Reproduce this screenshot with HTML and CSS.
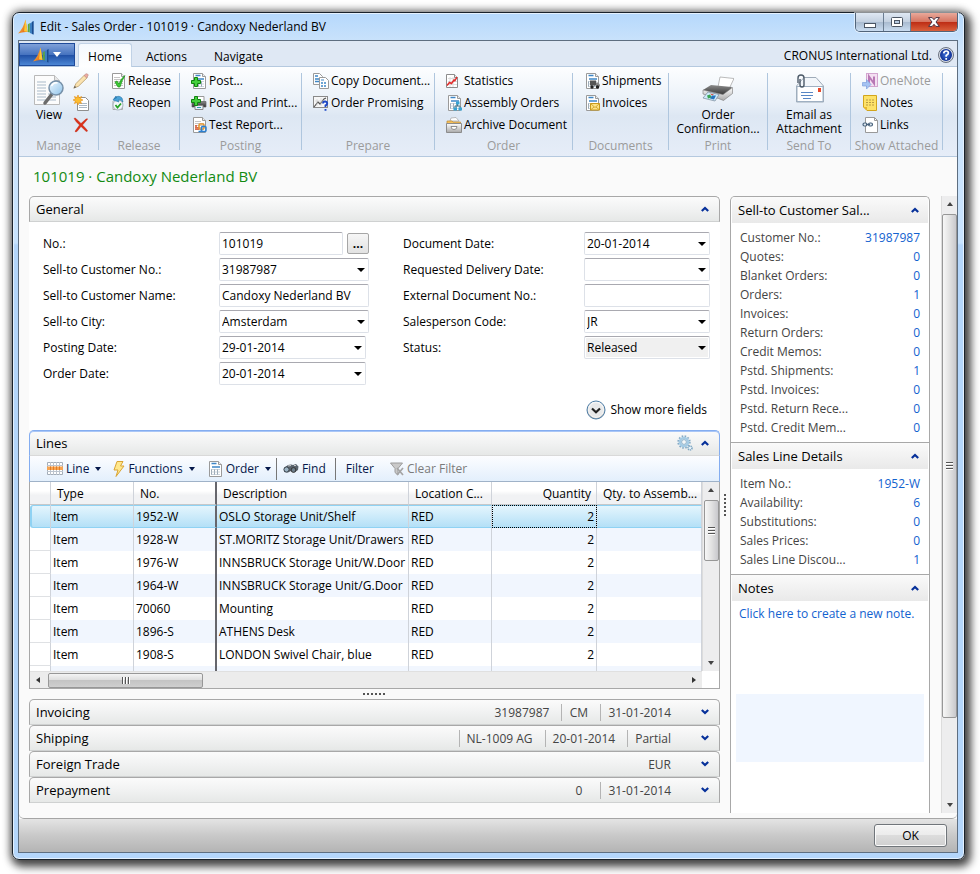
FILE: index.html
```html
<!DOCTYPE html>
<html lang="en">
<head>
<meta charset="utf-8">
<title>Edit - Sales Order - 101019 · Candoxy Nederland BV</title>
<link rel="stylesheet" href="styles.css">
</head>
<body>
<svg class="defs" aria-hidden="true">
  <defs>
    <linearGradient id="g-sail" x1="0" y1="0" x2="1" y2="1"><stop offset="0" stop-color="#ffd34d"/><stop offset="1" stop-color="#e0560f"/></linearGradient>
    <linearGradient id="g-glass" x1="0" y1="0" x2="1" y2="1"><stop offset="0" stop-color="#eef8ff"/><stop offset="1" stop-color="#8fc3ea"/></linearGradient>
    <linearGradient id="g-dark" x1="0" y1="0" x2="0" y2="1"><stop offset="0" stop-color="#8b8b8b"/><stop offset="1" stop-color="#2c2c2c"/></linearGradient>
    <linearGradient id="g-silver" x1="0" y1="0" x2="0" y2="1"><stop offset="0" stop-color="#ffffff"/><stop offset="1" stop-color="#a9a9a9"/></linearGradient>
    <radialGradient id="g-help"><stop offset="0" stop-color="#3f74dc"/><stop offset="1" stop-color="#0f2f94"/></radialGradient>

    <symbol id="logo" viewBox="0 0 16 16">
      <path d="M0 14.500C4 11 6 6 7.500 .5L9.500 13Q5 12.500 0 14.500Z" fill="url(#g-sail)"/>
      <path d="M7.500 .5 6 12.300l3.500.7Z" fill="#fcc934"/>
      <path d="M9.800 13V5.500l2-1.500v9.500Z" fill="#5aa545"/>
      <path d="M12 14V4.500L15.500 2v13.500Z" fill="#3b7fc0"/>
      <path d="M14 3l1.500-1v13.500L14 15Z" fill="#1c4b8f"/>
    </symbol>
    <symbol id="page" viewBox="0 0 16 16">
      <path d="M2.500.5h9l3 3v12h-12Z" fill="#fff" stroke="#9a9a9a"/>
      <path d="M11.500.5v3h3" fill="#eee" stroke="#9a9a9a"/>
      <path d="M4 4.500h6M4 6.500h9M4 8.500h9M4 10.500h9M4 12.500h9" stroke="#c6c6c6"/>
    </symbol>
    <symbol id="bluepage" viewBox="0 0 16 16">
      <path d="M2.500.5h9l3 3v12h-12Z" fill="#fff" stroke="#9a9a9a"/>
      <path d="M11.500.5v3h3" fill="#eee" stroke="#9a9a9a"/>
      <path d="M4.500 2.500h5M5 6h8" stroke="#3e86c6" stroke-width="1.500"/>
      <path d="M4.500 8v6M7.500 8v6M10.500 8v6" stroke="#9aa8b4"/>
      <path d="M4 8.500h9M4 11h9M4 13.500h9" stroke="#b6c3ce" stroke-width=".7"/>
    </symbol>
    <symbol id="view" viewBox="0 0 32 32">
      <path d="M1.500 1.500h20l5 5v24h-25Z" fill="#fcfcfc" stroke="#b9b9b9"/>
      <path d="M21.500 1.500v5h5" fill="#e6e6e6" stroke="#b9b9b9"/>
      <path d="M4 8h9M4 11h9M4 14h9M4 17h9M4 20h9M4 23h9M4 26h9M15 20h8M15 23h8M15 26h8" stroke="#a9bac9"/>
      <path d="M19 20 12 29" stroke="#6b6b6b" stroke-width="3.500" stroke-linecap="round"/>
      <circle cx="23" cy="14" r="7" fill="url(#g-glass)" stroke="#7690a8" stroke-width="1.500"/>
      <path d="M18.500 12q2-4 6-3" fill="none" stroke="#fff" stroke-width="1.500"/>
    </symbol>
    <symbol id="pencil" viewBox="0 0 16 16">
      <path d="M.8 15.200 3 10.500 11.500 2l2.700 2.700L5.500 13.200Z" fill="#fbe3b0" stroke="#b59a6a" stroke-width=".8"/>
      <path d="M11 2.500 13 .8q1.500-.4 2.300 1.200L13.700 5Z" fill="#efaaa2" stroke="#b58a80" stroke-width=".6"/>
      <path d="m.8 15.200 1-2.400 1.400 1.400Z" fill="#555"/>
    </symbol>
    <symbol id="newdoc" viewBox="0 0 16 16">
      <path d="M4.500 2.500h8l3 3v10h-11Z" fill="#fff" stroke="#8f8f8f"/>
      <path d="M6 8.500h8M6 10.500h8M6 12.500h8" stroke="#a9b7c4"/>
      <path d="m5 0 1 2.700L8.600 1.500 7.500 4.100 10 5 7.500 6l1 2.500L6 7.500 5 10 4 7.500 1.400 8.500 2.500 6 0 5l2.500-1L1.400 1.500 4 2.600Z" fill="#fdbd2e" stroke="#e28a12" stroke-width=".6"/>
    </symbol>
    <symbol id="delete" viewBox="0 0 16 16">
      <path d="M1 1.500q1-1 2 0L8 6.500 13 2q2-.8 1.500.3L9.500 8q3 3 5 5.500 0 1.500-1.500.8L8 9.500 4 14.500q-2.200 1-1.800-.5L6.500 8Q2.500 4.500 1 1.500Z" fill="#dc2f17" stroke="#b8240f" stroke-width=".4"/>
    </symbol>
    <symbol id="check" viewBox="0 0 16 16"><path d="m5 9 2-1 2 3q2-6 6-8.500Q12 7 10 14H8Z" fill="#3cc935" stroke="#1c941a" stroke-width=".7"/></symbol>
    <symbol id="reopen" viewBox="0 0 16 16">
      <path d="M3 6v8.500h9.500V6" fill="#f5f5f5" stroke="#aaa"/>
      <circle cx="8" cy="10" r="5" fill="#f4f7f9" stroke="#a8b4be"/>
      <path d="M4 4Q8-1 12 3l1 4q-3-3-5-2l1 2-6-2 3-4 .5 2Z" fill="#4aa3d8" stroke="#2774a8" stroke-width=".6"/>
      <path d="m5.500 10 2 2.500L11 8.500" fill="none" stroke="#27a327" stroke-width="1.800"/>
    </symbol>
    <symbol id="plus" viewBox="0 0 16 16"><path d="M3.500 4.500h3v3h3v3h-3v3h-3v-3h-3v-3h3Z" fill="#45d03d" stroke="#10830e"/></symbol>
    <symbol id="printer16" viewBox="0 0 16 16">
      <path d="M5 1.500h8V7H5Z" fill="#fff" stroke="#999"/>
      <path d="M1 6.500h14V12H1Z" fill="url(#g-dark)" stroke="#666" stroke-width=".7"/>
      <path d="M4 10.500h8v4H4Z" fill="#e9f4fb" stroke="#888"/>
      <path d="M6 12.500h4" stroke="#39a"/>
    </symbol>
    <symbol id="report" viewBox="0 0 16 16">
      <path d="M5 13V8M7 13v-3" stroke="#d9532c" stroke-width="1.500"/>
      <rect x="8" y="7" width="5" height="5" rx="1" fill="none" stroke="#e8952c" stroke-width="1.500"/>
      <rect x="10.500" y="9.500" width="4.500" height="5" rx="1" fill="none" stroke="#2b7fd0" stroke-width="1.500"/>
      <path d="M7.500 14.500h3v-2" fill="none" stroke="#2b7fd0" stroke-width="1.500"/>
    </symbol>
    <symbol id="copy" viewBox="0 0 16 16">
      <path d="M.5.5h6l3 3v8h-9Z" fill="#fff" stroke="#9a9a9a"/><path d="M2 3h3M2 6h5M2 8.500h4" stroke="#3e86c6" stroke-width="1.300"/>
      <path d="M6.500 4.500h6l3 3v8h-9Z" fill="#fff" stroke="#9a9a9a"/><path d="M8 7h3" stroke="#3e86c6"/><path d="M8 10h6M8 13h6" stroke="#3e86c6" stroke-width="1.600" stroke-dasharray="2 1"/>
    </symbol>
    <symbol id="promise" viewBox="0 0 16 16">
      <rect x=".5" y="1.500" width="14" height="11" fill="#f7f7f7" stroke="#8a8a8a"/>
      <path d="m1 12 4-5 2 2 4-5 2-1" fill="none" stroke="#555" stroke-width="1.200"/>
      <path d="M4 4v7M8 3v8M2 6h11" stroke="#ccc" stroke-width=".6"/>
      <path d="M10 8.500q0-2 2-2t2.200 2q0 1.300-1.700 2v1.500M12.500 14v1.800" fill="none" stroke="#1d48c5" stroke-width="1.900"/>
    </symbol>
    <symbol id="stats" viewBox="0 0 16 16">
      <path d="M.5 1.500h8l3 3v10H.5Z" fill="#fff" stroke="#8d8d8d"/>
      <path d="M8.500 1.500v3h3" fill="#eee" stroke="#8d8d8d"/>
      <path d="M2 5.500h9M2 8.500h9M2 11.500h9M4 4v10M7 4v10" stroke="#dedede"/>
      <path d="m1 12.500 2.500-3 2 1 2.500-3.500 1 .5L11 4" fill="none" stroke="#e12b2b" stroke-width="1.500"/>
    </symbol>
    <symbol id="tree" viewBox="0 0 16 16">
      <path d="M11.500 9v2M9 13v-2h5v2" fill="none" stroke="#478"/>
      <path d="M10 6.500h3.500v3H10ZM7.500 12.500H11v3H7.500ZM12.500 12.500H16v3h-3.500Z" fill="#37a3d3"/>
    </symbol>
    <symbol id="archive" viewBox="0 0 16 16">
      <path d="m4 4 1-3 5-.5 3 3.500Z" fill="#fff" stroke="#aaa" stroke-width=".8"/>
      <path d="M1 4h5l1 1h7.500v2H1Z" fill="#f6c15c" stroke="#c08c34" stroke-width=".7"/>
      <path d="M.5 6.500h15v9H.5Z" fill="url(#g-silver)" stroke="#8c8c8c"/>
      <path d="M5 9.500h6q0 3-3 3t-3-3Z" fill="#fff" stroke="#777" stroke-width=".8"/>
    </symbol>
    <symbol id="truck" viewBox="0 0 16 16">
      <path d="M6 7.500h6v5H6Z" fill="#555"/><path d="M12 9.500h2l2 2v2h-4Z" fill="#888"/><circle cx="8" cy="14" r="1.700" fill="#222"/><circle cx="13.500" cy="14" r="1.700" fill="#222"/>
    </symbol>
    <symbol id="mail" viewBox="0 0 16 16"><path d="M6.500 8.500h9v6.500h-9Z" fill="#fde387" stroke="#c99a1c"/><path d="m6.500 8.500 4.500 4 4.500-4M6.500 15l3.500-3M15.500 15 12 12" fill="none" stroke="#c99a1c" stroke-width=".8"/></symbol>
    <symbol id="printer32" viewBox="0 0 32 32">
      <path d="m16 13 2-10 14 1.500-5 10.500Z" fill="#fff" stroke="#aaa" stroke-width=".8"/>
      <path d="M1 16 9 11l21 2-3 5-6 4Z" fill="url(#g-dark)"/>
      <path d="m1 16 20 4.500 9.500-7v6l-9 7-5-2L1 20Z" fill="url(#g-silver)" stroke="#777" stroke-width=".6"/>
      <path d="m6 18 11 2.500-4 6.500-12-3Z" fill="#cfeafa" stroke="#789" stroke-width=".7"/>
      <path d="m5 21.500 3-1 2 3-4 1Z" fill="#38a453"/><path d="m10 21.500 4 0-2 4-4-1Z" fill="#2774bd"/><path d="m8 19.500 4 1-2 1Z" fill="#d34a38"/>
    </symbol>
    <symbol id="envelope" viewBox="0 0 32 32">
      <path d="M3.500 12 11 3.500h12L30.500 12v16h-27Z" fill="#f2f6fa" stroke="#9fabb8"/>
      <path d="M4 12.500h26v15H4Z" fill="#fff" stroke="#9fb0c2"/>
      <path d="M8 18.500h12M8 21.500h12M10 24.500h8" stroke="#5786c4"/>
      <path d="M25 14h3v4h-3Z" fill="#e8472a"/>
      <path d="M5 9V4q0-3 3-3t3 3v7q0 2-2 2t-2-2V5" fill="none" stroke="#4d5a68" stroke-width="1.400"/>
    </symbol>
    <symbol id="onenote" viewBox="0 0 16 16">
      <rect x="4.500" y=".5" width="11" height="13" fill="#f4dff2" stroke="#d3a5d0"/>
      <path d="M7 10.500V3.500l5 7V3.500" fill="none" stroke="#b878b5" stroke-width="2"/>
      <path d="M.5 9.500h4v-3l4.500 5-4.500 4.500v-3h-4Z" fill="#a5c3f2" stroke="#80a2de" stroke-width=".7"/>
    </symbol>
    <symbol id="sticky" viewBox="0 0 16 16">
      <path d="M1.500.5h13v15H5l-3.500-3.500Z" fill="#fde268" stroke="#d2a51d"/><path d="M1.500 12H5v3.500Z" fill="#e8b72b"/>
      <path d="M4 5h8M4 7.500h8M4 10h8" stroke="#b99b45" stroke-dasharray="2 1"/>
    </symbol>
    <symbol id="links" viewBox="0 0 16 16">
      <path d="M3.500.5h9l3 3v12h-12Z" fill="#fff" stroke="#999"/><path d="M12.500.5v3h3" fill="none" stroke="#999"/>
      <rect x="1" y="6" width="4" height="3" rx="1.500" fill="#dfe8f0" stroke="#47617b" stroke-width="1.200"/><rect x="6.500" y="6" width="4" height="3" rx="1.500" fill="#dfe8f0" stroke="#47617b" stroke-width="1.200"/><path d="M4 7.500h4" stroke="#47617b" stroke-width="1.200"/>
    </symbol>
    <symbol id="help" viewBox="0 0 16 16">
      <circle cx="8" cy="8" r="7.500" fill="#d8dde6" stroke="#69717f"/><circle cx="8" cy="8" r="6" fill="url(#g-help)"/>
      <path d="M5.700 6.300Q6 4 8.200 4t2.200 2.100Q10.400 7.500 8.200 8.500v1.200M8.200 11v1.700" fill="none" stroke="#fff" stroke-width="1.700"/>
    </symbol>
    <symbol id="linegrid" viewBox="0 0 16 14">
      <path d="M.5.500h15v12H.5Z" fill="#fff" stroke="#a3adb8"/>
      <path d="M0 3.500h16M0 9.500h16M3.500 0v13M6.500 0v13M9.500 0v13M12.500 0v13" stroke="#bcc4ce"/>
      <path d="M0 4.500h16v3.500H0Z" fill="#f7a552"/><path d="M3.500 4.500v3.500M6.500 4.500v3.500M9.500 4.500v3.500M12.500 4.500v3.500" stroke="#e57c22"/>
    </symbol>
    <symbol id="bolt" viewBox="0 0 12 16"><path d="M4 .5h6L7.500 5H11L3 15.500 5 9H1Z" fill="#ffe88c" stroke="#d9a436"/></symbol>
    <symbol id="binoc" viewBox="0 0 16 12">
      <path d="M1 5 5 2l3-.5 2 .5 3-1 2.500 2.500L15 7l-3 2-3-1.500L8 8 5 9.500 1 9Z" fill="#59636d"/>
      <circle cx="3.500" cy="6.500" r="2.600" fill="#9db4c4" stroke="#3c444c"/><circle cx="10.500" cy="7" r="2.400" fill="#6f808d" stroke="#333"/><path d="m5 3 3-.5M11 2.500l2 0" stroke="#ccc"/>
    </symbol>
    <symbol id="funnel" viewBox="0 0 14 14">
      <path d="M.5 1h12L8 6.500V13l-3-2.500v-4Z" fill="#c9c9c9" stroke="#9c9c9c"/><path d="m7 6 6 7M13 6l-6 7" stroke="#a4a4a4" stroke-width="1.700"/>
    </symbol>
    <symbol id="gears" viewBox="0 0 16 16">
      <circle cx="7" cy="7" r="5.800" fill="none" stroke="#86abc6" stroke-width="1.800" stroke-dasharray="1.600 1.430"/>
      <circle cx="7" cy="7" r="4" fill="#f4fafe" stroke="#a5cbe4" stroke-width="2.600"/><circle cx="7" cy="7" r="2.400" fill="#f5f7f8" stroke="#6f9ab8" stroke-width=".7"/>
      <circle cx="13" cy="13" r="2" fill="#e8f3fa" stroke="#7ea6c2" stroke-width="1.600" stroke-dasharray="1.200 .6"/>
    </symbol>
    <symbol id="up" viewBox="0 0 8 6"><path d="m.8 5 3.200-3 3.200 3" fill="none" stroke="#06309a" stroke-width="2.200"/></symbol>
    <symbol id="down" viewBox="0 0 8 6"><path d="m.8 1 3.200 3 3.200-3" fill="none" stroke="#06309a" stroke-width="2.200"/></symbol>
    <symbol id="more" viewBox="0 0 20 20">
      <circle cx="10" cy="10" r="9" fill="url(#g-silver)" stroke="#4d7da6"/><circle cx="10" cy="10" r="7.500" fill="#e8e9ea" stroke="#f7f7f7"/>
      <path d="m6 8.500 4 3.700 4-3.700" fill="none" stroke="#222" stroke-width="2.200"/>
    </symbol>
  </defs>
</svg>

<div class="window">
  <header class="titlebar">
    <svg class="i16"><use href="#logo"/></svg>
    <h1>Edit - Sales Order - 101019 · Candoxy Nederland BV</h1>
    <div class="winbtns">
      <button class="wb min" aria-label="Minimize"><svg width="12" height="5"><rect x=".5" y=".5" width="11" height="4" fill="#fff" stroke="#4b5563"/></svg></button>
      <button class="wb max" aria-label="Maximize"><svg width="12" height="10"><rect x=".5" y=".5" width="11" height="9" rx="1" fill="#fff" stroke="#4b5563"/><rect x="3.500" y="3.500" width="5" height="3" fill="#b7cbe2" stroke="#4b5563"/></svg></button>
      <button class="wb close" aria-label="Close"><svg width="12" height="10"><path d="M.6.600h3.600L6 2.700 7.800.600h3.600L8 5l3.400 4.400H7.800L6 7.300 4.200 9.400H.6L4 5Z" fill="#fff" stroke="#4a3040"/></svg></button>
    </div>
  </header>

  <div class="client">
    <nav class="tabs">
      <button class="appmenu" aria-label="Application menu"><svg class="i16"><use href="#logo"/></svg><i class="tri"></i></button>
      <button class="tab active">Home</button>
      <button class="tab">Actions</button>
      <button class="tab">Navigate</button>
      <span class="company">CRONUS International Ltd.</span>
      <svg class="i16"><use href="#help"/></svg>
    </nav>

    <div class="ribbon">
      <section class="group g-manage">
        <div class="items split">
          <button class="big"><svg class="i32"><use href="#view"/></svg><span>View</span></button>
          <div class="col">
            <button class="cmd" aria-label="Edit"><svg class="i16"><use href="#pencil"/></svg></button>
            <button class="cmd" aria-label="New"><svg class="i16"><use href="#newdoc"/></svg></button>
            <button class="cmd" aria-label="Delete"><svg class="i16"><use href="#delete"/></svg></button>
          </div>
        </div>
        <h2>Manage</h2>
      </section>
      <section class="group g-release">
        <div class="items">
          <button class="cmd"><svg class="i16"><use href="#page"/><use href="#check"/></svg>Release</button>
          <button class="cmd"><svg class="i16"><use href="#reopen"/></svg>Reopen</button>
        </div>
        <h2>Release</h2>
      </section>
      <section class="group g-posting">
        <div class="items">
          <button class="cmd"><svg class="i16"><use href="#bluepage"/><use href="#plus"/></svg>Post...</button>
          <button class="cmd"><svg class="i16"><use href="#printer16"/><use href="#plus" y="-3"/></svg>Post and Print...</button>
          <button class="cmd"><svg class="i16"><use href="#page"/><use href="#report"/></svg>Test Report...</button>
        </div>
        <h2>Posting</h2>
      </section>
      <section class="group g-prepare">
        <div class="items">
          <button class="cmd"><svg class="i16"><use href="#copy"/></svg>Copy Document...</button>
          <button class="cmd"><svg class="i16"><use href="#promise"/></svg>Order Promising</button>
        </div>
        <h2>Prepare</h2>
      </section>
      <section class="group g-order">
        <div class="items">
          <button class="cmd"><svg class="i16"><use href="#stats"/></svg>Statistics</button>
          <button class="cmd"><svg class="i16"><use href="#bluepage"/><use href="#tree"/></svg>Assembly Orders</button>
          <button class="cmd"><svg class="i16"><use href="#archive"/></svg>Archive Document</button>
        </div>
        <h2>Order</h2>
      </section>
      <section class="group g-documents">
        <div class="items">
          <button class="cmd"><svg class="i16"><use href="#bluepage"/><use href="#truck"/></svg>Shipments</button>
          <button class="cmd"><svg class="i16"><use href="#bluepage"/><use href="#mail"/></svg>Invoices</button>
        </div>
        <h2>Documents</h2>
      </section>
      <section class="group g-print">
        <div class="items center"><button class="big"><svg class="i32"><use href="#printer32"/></svg><span>Order<br>Confirmation...</span></button></div>
        <h2>Print</h2>
      </section>
      <section class="group g-send">
        <div class="items center"><button class="big"><svg class="i32"><use href="#envelope"/></svg><span>Email as<br>Attachment</span></button></div>
        <h2>Send To</h2>
      </section>
      <section class="group g-attached">
        <div class="items">
          <button class="cmd off" disabled><svg class="i16"><use href="#onenote"/></svg>OneNote</button>
          <button class="cmd"><svg class="i16"><use href="#sticky"/></svg>Notes</button>
          <button class="cmd"><svg class="i16"><use href="#links"/></svg>Links</button>
        </div>
        <h2>Show Attached</h2>
      </section>
    </div>

    <div class="content">
      <h2 class="pagetitle">101019 · Candoxy Nederland BV</h2>
      <div class="workspace">
        <main class="main">
          <section class="panel">
            <header class="bar"><h3>General</h3><svg class="chev"><use href="#up"/></svg></header>
            <div class="fields">
              <div class="fcol left">
                <div class="f"><label for="no">No.:</label><input id="no" class="mid" value="101019"><button class="dots" aria-label="Assist edit">...</button></div>
                <div class="f"><label for="cno">Sell-to Customer No.:</label><span class="combo wide"><select id="cno"><option>31987987</option></select></span></div>
                <div class="f"><label for="cname">Sell-to Customer Name:</label><input id="cname" class="wide" value="Candoxy Nederland BV"></div>
                <div class="f"><label for="city">Sell-to City:</label><span class="combo wide"><select id="city"><option>Amsterdam</option></select></span></div>
                <div class="f"><label for="pdate">Posting Date:</label><span class="combo date"><select id="pdate"><option>29-01-2014</option></select></span></div>
                <div class="f"><label for="odate">Order Date:</label><span class="combo date"><select id="odate"><option>20-01-2014</option></select></span></div>
              </div>
              <div class="fcol right">
                <div class="f"><label for="ddate">Document Date:</label><span class="combo"><select id="ddate"><option>20-01-2014</option></select></span></div>
                <div class="f"><label for="rdate">Requested Delivery Date:</label><span class="combo"><select id="rdate"><option></option></select></span></div>
                <div class="f"><label for="ext">External Document No.:</label><input id="ext"></div>
                <div class="f"><label for="sp">Salesperson Code:</label><span class="combo"><select id="sp"><option>JR</option></select></span></div>
                <div class="f"><label for="st">Status:</label><span class="combo"><select id="st" class="ro"><option>Released</option></select></span></div>
              </div>
            </div>
            <button class="showmore"><svg width="20" height="20"><use href="#more"/></svg>Show more fields</button>
          </section>

          <section class="lines">
            <header class="bar"><h3>Lines</h3><svg class="i16"><use href="#gears"/></svg><svg class="chev"><use href="#up"/></svg></header>
            <div class="toolbar">
              <button class="tb"><svg width="16" height="14"><use href="#linegrid"/></svg>Line<i class="tri"></i></button>
              <button class="tb"><svg width="12" height="16"><use href="#bolt"/></svg>Functions<i class="tri"></i></button>
              <button class="tb"><svg class="i16"><use href="#bluepage"/></svg>Order<i class="tri"></i></button>
              <button class="tb sep"><svg width="16" height="12"><use href="#binoc"/></svg>Find</button>
              <button class="tb sep">Filter</button>
              <button class="tb off" disabled><svg width="14" height="14"><use href="#funnel"/></svg>Clear Filter</button>
            </div>
            <div class="grid">
              <div class="tablewrap">
                <table>
                  <colgroup><col class="c-sel"><col class="c-std"><col class="c-std"><col><col class="c-std"><col class="c-num"><col class="c-num"></colgroup>
                  <thead><tr><th></th><th>Type</th><th class="frozen">No.</th><th>Description</th><th>Location C...</th><th class="num">Quantity</th><th class="num">Qty. to Assemb...</th></tr></thead>
                  <tbody>
                    <tr class="sel"><td></td><td>Item</td><td class="frozen">1952-W</td><td>OSLO Storage Unit/Shelf</td><td>RED</td><td class="num focus">2</td><td></td></tr>
                    <tr><td></td><td>Item</td><td class="frozen">1928-W</td><td>ST.MORITZ Storage Unit/Drawers</td><td>RED</td><td class="num">2</td><td></td></tr>
                    <tr><td></td><td>Item</td><td class="frozen">1976-W</td><td>INNSBRUCK Storage Unit/W.Door</td><td>RED</td><td class="num">2</td><td></td></tr>
                    <tr><td></td><td>Item</td><td class="frozen">1964-W</td><td>INNSBRUCK Storage Unit/G.Door</td><td>RED</td><td class="num">2</td><td></td></tr>
                    <tr><td></td><td>Item</td><td class="frozen">70060</td><td>Mounting</td><td>RED</td><td class="num">2</td><td></td></tr>
                    <tr><td></td><td>Item</td><td class="frozen">1896-S</td><td>ATHENS Desk</td><td>RED</td><td class="num">2</td><td></td></tr>
                    <tr><td></td><td>Item</td><td class="frozen">1908-S</td><td>LONDON Swivel Chair, blue</td><td>RED</td><td class="num">2</td><td></td></tr>
                    <tr><td></td><td></td><td class="frozen"></td><td></td><td></td><td></td><td></td></tr>
                  </tbody>
                </table>
              </div>
              <div class="vbar"><i class="ar u"></i><div class="thumb short"></div><i class="ar d"></i></div>
              <div class="hbar"><i class="ar l"></i><div class="thumb"></div><i class="ar r"></i></div>
            </div>
          </section>

          <div class="grip"></div>

          <section class="bar folded"><h3>Invoicing</h3><span>31987987</span><span>CM</span><span>31-01-2014</span><svg class="chev"><use href="#down"/></svg></section>
          <section class="bar folded"><h3>Shipping</h3><span class="first">NL-1009 AG</span><span>20-01-2014</span><span>Partial</span><svg class="chev"><use href="#down"/></svg></section>
          <section class="bar folded"><h3>Foreign Trade</h3><span>EUR</span><svg class="chev"><use href="#down"/></svg></section>
          <section class="bar folded"><h3>Prepayment</h3><span>0</span><span>31-01-2014</span><svg class="chev"><use href="#down"/></svg></section>
        </main>

        <div class="vgrip"></div>

        <aside class="side">
          <header class="sbar"><h3>Sell-to Customer Sal...</h3><svg class="chev"><use href="#up"/></svg></header>
          <dl>
            <div><dt>Customer No.:</dt><dd><a href="#">31987987</a></dd></div>
            <div><dt>Quotes:</dt><dd><a href="#">0</a></dd></div>
            <div><dt>Blanket Orders:</dt><dd><a href="#">0</a></dd></div>
            <div><dt>Orders:</dt><dd><a href="#">1</a></dd></div>
            <div><dt>Invoices:</dt><dd><a href="#">0</a></dd></div>
            <div><dt>Return Orders:</dt><dd><a href="#">0</a></dd></div>
            <div><dt>Credit Memos:</dt><dd><a href="#">0</a></dd></div>
            <div><dt>Pstd. Shipments:</dt><dd><a href="#">1</a></dd></div>
            <div><dt>Pstd. Invoices:</dt><dd><a href="#">0</a></dd></div>
            <div><dt>Pstd. Return Rece...</dt><dd><a href="#">0</a></dd></div>
            <div><dt>Pstd. Credit Mem...</dt><dd><a href="#">0</a></dd></div>
          </dl>
          <header class="sbar"><h3>Sales Line Details</h3><svg class="chev"><use href="#up"/></svg></header>
          <dl>
            <div><dt>Item No.:</dt><dd><a href="#">1952-W</a></dd></div>
            <div><dt>Availability:</dt><dd><a href="#">6</a></dd></div>
            <div><dt>Substitutions:</dt><dd><a href="#">0</a></dd></div>
            <div><dt>Sales Prices:</dt><dd><a href="#">0</a></dd></div>
            <div><dt>Sales Line Discou...</dt><dd><a href="#">1</a></dd></div>
          </dl>
          <header class="sbar"><h3>Notes</h3><svg class="chev"><use href="#up"/></svg></header>
          <a class="newnote" href="#">Click here to create a new note.</a>
          <div class="noteband"></div>
        </aside>

        <div class="vbar page"><i class="ar u"></i><div class="thumb long"></div><i class="ar d"></i></div>
      </div>
    </div>

    <footer class="footer"><button class="ok">OK</button></footer>
  </div>
</div>
</body>
</html>
```
FILE: styles.css
```css
* { box-sizing: border-box; }
html { height: 100%; }
body {
  margin: 0;
  height: 100%;
  min-height: 860px;
  padding: 12px 15px 14px 12px;
  background: #fff;
  font: 12px/16px "Open Sans", "Noto Sans", sans-serif;
  color: #000;
}
h1, h2, h3, dl, dd { margin: 0; font-weight: 400; }
h1, h2 { font-size: 12px; }
button, input, select { font: inherit; color: inherit; margin: 0; }
button { background: none; border: 0; padding: 0; white-space: nowrap; }
svg { display: block; flex: none; }
.defs { position: absolute; width: 0; height: 0; }
.i16 { width: 16px; height: 16px; }
.i32 { width: 32px; height: 32px; }
.chev { width: 8px; height: 6px; }

.window {
  display: flex;
  flex-direction: column;
  height: 100%;
  padding: 0 6px 6px 5px;
  border: 1px solid #1a222b;
  border-radius: 7px;
  background: linear-gradient(#b5d8fc, #cfe5fb 36px, #c8e3fe 230px, #b4d6fb 232px);
  box-shadow: inset 0 0 0 1px #e4f1fe, 3px 4px 9px 3px rgba(0, 0, 0, .65), 0 0 8px 2px rgba(0, 0, 0, .3);
}
.titlebar { display: flex; align-items: flex-start; flex: none; height: 27px; padding-top: 6px; gap: 6px; }
.titlebar h1 { flex: 1; white-space: nowrap; }
.winbtns { display: flex; margin-top: -6px; border: 1px solid #51647a; border-top: 0; border-radius: 0 0 5px 5px; overflow: hidden; box-shadow: 0 0 0 1px rgba(255, 255, 255, .5); }
.wb { display: grid; place-items: center; height: 18px; width: 27px; border-left: 1px solid #6b7d92; background: linear-gradient(#dfe8f3, #c3d0e0 50%, #a9bacf 50%, #c9dcf0); }
.wb.min { width: 27px; border-left: 0; padding-top: 6px; }
.wb.close { width: 47px; background: linear-gradient(#e9a99b, #d5735f 50%, #bd2b13 50%, #d9603c); }

.client { display: flex; flex-direction: column; flex: 1; min-height: 0; border: 1px solid #5e6e80; background: #fafafa; }

.tabs { display: flex; align-items: center; flex: none; height: 26px; padding: 2px 3px 0 0; border-bottom: 1px solid #b5c9df; background: #dfe8f4; }
.appmenu { display: flex; align-items: center; justify-content: center; gap: 4px; width: 56px; height: 23px; margin-right: 3px; border: 1px solid #1e4a9a; background: linear-gradient(#7fa0d8, #4774c0 50%, #1d4ca2 50%, #4c86d4); align-self: flex-start; }
.appmenu .tri { border-top-color: #fff; border-width: 5px 4px 0; }
.tri { width: 0; height: 0; border: solid transparent; border-width: 4px 3px 0; border-top-color: #06184a; }
.tab { height: 25px; padding: 2px 13px 0 14px; align-self: flex-start; }
.tab.active { width: 54px; padding: 2px 0 0; border: 1px solid #c1d2e6; border-bottom: 0; border-radius: 3px 3px 0 0; background: linear-gradient(#f4f9fe, #fff); }
.company { margin-left: auto; margin-right: 6px; padding-top: 2px; white-space: nowrap; }

.ribbon { display: flex; flex: none; height: 90px; padding: 2px 0 6px; border-bottom: 1px solid #b5c9df; background: linear-gradient(#fdfeff, #e9f0f8 40%, #dde7f3 55%, #e6edf8); }
.group { display: flex; flex-direction: column; flex: none; padding: 2px 0 0 11px; border-right: 1px solid #afc6de; margin-top: 4px; }
.group h2 { margin: 0 0 -3px -11px; text-align: center; color: #9b9b9b; white-space: nowrap; line-height: 15px; }
.items { flex: 1; margin-top: -5px; }
.items.split { display: flex; gap: 8px; margin-left: 3px; }
.items.center { display: flex; justify-content: center; margin-left: -11px; }
.cmd { display: flex; align-items: center; gap: 2px; height: 22px; }
.big { display: flex; flex-direction: column; align-items: center; align-self: flex-start; padding-top: 4px; }
.big span { line-height: 14px; margin-top: 2px; }
.off { color: #9b9b9b; }
.g-manage { width: 80px; }
.g-release { width: 81px; }
.g-posting { width: 122px; }
.g-prepare { width: 133px; }
.g-order { width: 138px; }
.g-documents { width: 96px; }
.g-print { width: 99px; }
.g-send { width: 83px; }
.g-attached { width: 92px; }

.content { display: flex; flex-direction: column; flex: 1; min-height: 0; padding: 0 0 5px 10px; border-bottom: 1px solid #a5a5a5; border-radius: 0 0 5px 5px; background: #fafafa; }
.pagetitle { flex: none; height: 39px; padding: 8px 0 0 4px; font-size: 15px; line-height: 22px; color: #128a12; }
.workspace { display: flex; flex: 1; min-height: 0; }
.main { display: flex; flex-direction: column; flex: 1; min-width: 0; }

.bar { display: flex; align-items: center; flex: none; height: 26px; padding: 0 10px 0 6px; border: 1px solid #a8a8a8; border-bottom-color: #cfd1d1; border-radius: 5px 5px 0 0; background: linear-gradient(#fbfbfb, #f1f2f2 50%, #e6e8e7); }
.bar h3 { flex: 1; font-size: 13px; }
.panel { flex: none; background: #fff; padding-bottom: 10px; }
.fields { display: flex; justify-content: space-between; padding: 10px 10px 0 14px; }
.f { display: flex; align-items: center; height: 26px; padding-bottom: 3px; }
.left label { width: 176px; }
.right label { width: 181px; }
.f label { white-space: nowrap; }
.f input, .f select { width: 126px; height: 23px; padding: 0 2px; border: 1px solid #dde1e8; border-top-color: #a9a9b0; border-radius: 2px; background: #fff; outline: 0; }
.f .mid { width: 124px; }
.f .wide, .wide select { width: 150px; }
.date select { width: 147px; }
.f select { appearance: none; display: block; }
.f select.ro { background: #f0f0f0; box-shadow: inset 0 0 0 1px #fff; }
.combo { position: relative; }
.combo::after { content: ""; position: absolute; right: 4px; top: 10px; border: solid transparent; border-width: 4px 4px 0; border-top-color: #000; pointer-events: none; }
.dots { width: 22px; height: 21px; margin-left: 4px; border: 1px solid #a6a6a6; border-radius: 2px; background: linear-gradient(#f6f6f6, #e2e2e2); font-weight: 700; }
.showmore { display: flex; align-items: center; gap: 4px; margin: 12px 13px 0 auto; height: 20px; }

.lines { display: flex; flex-direction: column; flex: 1; min-height: 0; border-bottom: 1px solid #a8a8a8; }
.lines .bar { border: 1px solid #84adf0; border-bottom-color: #d9d9d9; box-shadow: inset 0 1px 0 #a9c6f6; }
.lines .bar .i16 { margin-right: 8px; }
.toolbar { display: flex; align-items: center; flex: none; height: 26px; padding-left: 10px; border: 1px solid #84adf0; border-top: 0; border-bottom: 1px solid #9fb2c8; background: linear-gradient(#fcfdff, #e3effc); color: #06184a; }
.tb { display: flex; align-items: center; gap: 3px; height: 22px; padding: 0 4px 0 7px; }
.tb .tri { margin: 0 1px 0 3px; }
.tb.sep { border-left: 1px solid #777; padding: 0 9px 0 6px; }
.tb.sep + .tb.sep { padding-left: 10px; }
.tb.off { color: #7b7b7b; }
.grid { display: grid; grid-template: minmax(0, 1fr) 17px / minmax(0, 1fr) 17px; flex: 1; min-height: 0; border: solid #a8a8a8; border-width: 0 1px; background: #fff; }
.tablewrap { overflow: hidden; min-height: 0; }
table { width: 100%; table-layout: fixed; border-collapse: separate; border-spacing: 0; }
.c-sel { width: 21px; }
.c-std { width: 83px; }
.c-num { width: 105px; }
th, td { height: 23px; padding: 0 2px; border-right: 1px solid #cfd3da; text-align: left; font-weight: 400; white-space: nowrap; overflow: hidden; }
th { padding: 2px 5px 0 6px; border-bottom: 1px solid #c6c8ca; background: linear-gradient(#fff 40%, #f1f2f4 60%); }
tbody tr:nth-child(even) td { background: #f1f6fe; }
tbody td:first-child, tbody tr:nth-child(even) td:first-child { background: #fff; border-bottom: 1px solid #dfe1e4; }
.frozen { border-right: 2px solid #66666c; }
.num { text-align: right; }
tr.sel td, tbody tr.sel td:first-child { background: linear-gradient(#e4f5fd, #b4e0f7); border-top: 1px solid #8fd2f3; border-bottom: 1px solid #8fd2f3; }
tbody tr.sel td:first-child { border-left: 2px solid #8fd2f3; border-radius: 3px 0 0 3px; }
td.focus { outline: 1px dotted #000; outline-offset: -1px; }

.vbar { display: flex; flex-direction: column; align-items: center; justify-content: space-between; background: #ededee; border-left: 1px solid #dcdcdc; padding: 6px 0; }
.vbar .thumb { width: 15px; border: 1px solid #979797; border-radius: 2px; background: linear-gradient(90deg, #f7f7f7, #e2e2e2 50%, #c8c8cc); position: relative; margin: 8px 0 auto; }
.vbar .short { height: 61px; }
.vbar .long { height: 504px; }
.thumb::after { content: ""; position: absolute; left: 3px; top: calc(50% - 4px); width: 7px; height: 8px; background: repeating-linear-gradient(#555 0 1px, #fff 1px 2px, transparent 2px 3px); }
.ar { width: 0; height: 0; border: 3px solid transparent; flex: none; }
.ar.u { border-width: 0 3px 4px; border-bottom-color: #444; }
.ar.d { border-width: 4px 3px 0; border-top-color: #444; }
.ar.l { border-width: 3px 4px 3px 0; border-right-color: #333; }
.ar.r { border-width: 3px 0 3px 4px; border-left-color: #333; }
.hbar { display: flex; align-items: center; background: #ececec; padding: 0 6px; border-top: 1px solid #e0e0e0; }
.hbar .thumb { width: 155px; height: 15px; margin: 0 auto 0 8px; border: 1px solid #979797; border-radius: 2px; background: linear-gradient(#f4f4f4, #dcdcdc 50%, #c4c4c4 50%, #cfcfcf); position: relative; }
.hbar .thumb::after { left: calc(50% - 4px); top: 3px; width: 8px; height: 7px; background: repeating-linear-gradient(90deg, #555 0 1px, #fff 1px 2px, transparent 2px 3px); }

.grip { flex: none; width: 23px; height: 2px; margin: 4px auto; background: repeating-linear-gradient(90deg, #555 0 2px, transparent 2px 4px); }
.folded:last-child { margin-bottom: 10px; }
.folded span { min-width: 39px; padding: 0 12px 0 7px; line-height: 17px; text-align: center; color: #444; white-space: nowrap; border-left: 1px solid transparent; }
.folded span + span, .folded .first { border-left-color: #b4b4b4; }
.folded .chev { margin-left: 18px; }

.vgrip { flex: none; width: 2px; height: 23px; margin: 298px 4px 0; background: repeating-linear-gradient(#555 0 2px, transparent 2px 4px); }
.side { display: flex; flex-direction: column; flex: none; width: 200px; border: 1px solid #a8a8a8; border-bottom: 0; border-radius: 5px 5px 0 0; background: #fff; overflow: hidden; }
.sbar { display: flex; align-items: center; flex: none; height: 26px; margin: 0 1px; padding: 0 9px 0 6px; background: linear-gradient(#fafafa, #e9e9e9); }
.sbar h3 { flex: 1; font-size: 13px; white-space: nowrap; }
.side dl { flex: none; padding: 5px 9px; border-bottom: 1px solid #a8a8a8; }
.side dl div { display: flex; justify-content: space-between; height: 19px; line-height: 19px; color: #444; white-space: nowrap; }
a { color: #1262cf; text-decoration: none; }
.newnote { padding: 5px 8px; white-space: nowrap; }
.noteband { height: 68px; margin: 67px 5px 0; background: #f0f6ff; }
.page { flex: none; width: 16px; margin-left: 11px; }

.footer { display: flex; align-items: center; justify-content: flex-end; flex: none; height: 33px; padding-right: 10px; background: linear-gradient(#e4e4e4, #c9c9c9 50%, #b4b4b4); }
.ok { width: 73px; height: 23px; border: 1px solid #70757a; border-radius: 3px; background: linear-gradient(#f4f4f4, #ebebeb 50%, #dcdcdc 50%, #d0d0d0); box-shadow: inset 0 0 0 1px #fafafa; }
```
